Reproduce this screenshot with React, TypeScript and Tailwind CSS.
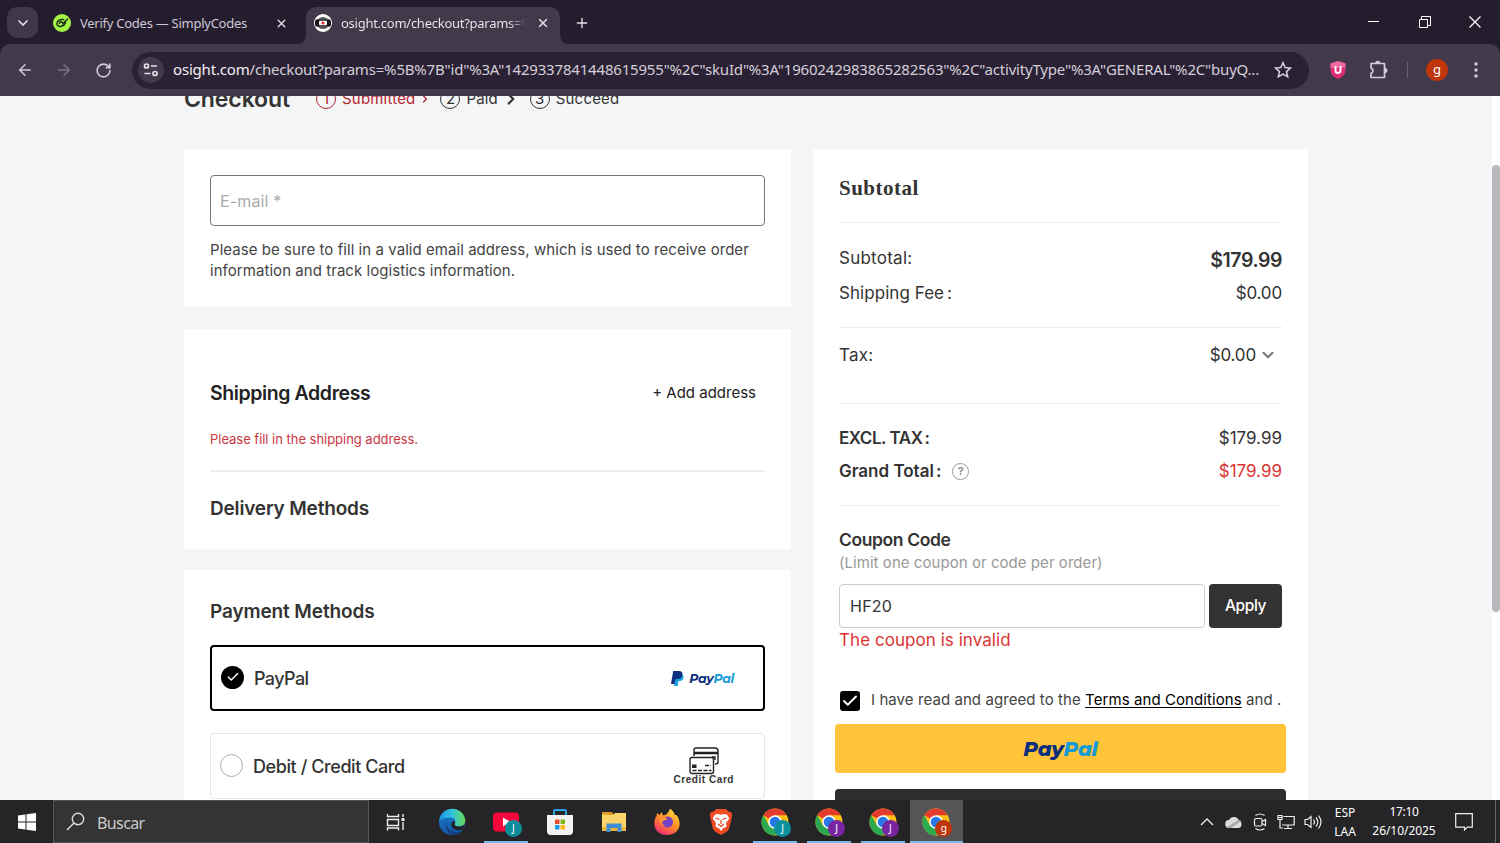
import type { ReactNode } from 'react';
import { ArrowLeft, ArrowRight, Check, ChevronDown, ChevronRight, Plus, RotateCw, X } from 'lucide-react';

// ── Helpers ──────────────────────────────────────────────────────────────────

const URL_TEXT =
  'osight.com/checkout?params=%5B%7B"id"%3A"1429337841448615955"%2C"skuId"%3A"1960242983865282563"%2C"activityType"%3A"GENERAL"%2C"buyQ...';

function PayPalWord({ className }: { className: string }) {
  return (
    <span className={`font-[Montserrat,Inter,sans-serif] italic ${className}`}>
      <span className="text-[#0b2f7d]">Pay</span>
      <span className="text-[#149bd7]">Pal</span>
    </span>
  );
}

// ── Browser chrome ───────────────────────────────────────────────────────────

function SimplyCodesIcon() {
  return (
    <svg viewBox="0 0 18 18" className="size-[18px]">
      <circle cx="9" cy="9" r="9" fill="#a3f545" />
      <g fill="none" stroke="#1c3018" strokeWidth="1.5" strokeLinecap="round" strokeLinejoin="round">
        <path d="M10.6 5.6C7.5 5 4.200 6.700 3.900 9.300c-.2 2.400 2.100 3.600 4.500 3 2-.5 3.500-2 4.200-3.700" />
        <path d="M6.500 9.300c.2-1.300 1.500-1.800 2.500-1.200l1 1.600L14.500 5" />
      </g>
    </svg>
  );
}

function OsightIcon() {
  return (
    <svg viewBox="0 0 18 18" className="size-[18px]">
      <circle cx="9" cy="9" r="9" fill="#fff" />
      <path d="M4 4.700Q9 1.700 14 4.700zM4 13.300Q9 16.300 14 13.300z" fill="#17141b" />
      <rect x="1" y="5.200" width="16" height="7.600" rx="2.500" fill="#17141b" />
      <rect x="5" y="6.700" width="8" height="4.600" rx="1" fill="#fff" />
      <circle cx="9" cy="9" r="1.600" fill="#e0313c" />
    </svg>
  );
}

function TabStrip() {
  return (
    <div className="flex h-11 items-end bg-[#241d2e] text-[#e4dfe8]">
      <div className="mb-1.5 ml-[7px] flex size-[31px] items-center justify-center rounded-[10px] bg-[#40384a]">
        <ChevronDown className="size-4" strokeWidth={2.5} />
      </div>
      <div className="ml-[15px] flex h-[37px] w-[237px] items-center pb-[5px]">
        <SimplyCodesIcon />
        <span className="ml-2 mt-px w-[196px] whitespace-nowrap pl-px text-[13px] tracking-[-0.26px] text-[#cfc8d6]">Verify Codes — SimplyCodes</span>
        <X className="size-[13px] shrink-0" strokeWidth={2.5} />
      </div>
      <svg viewBox="0 0 10 10" className="ml-1.5 size-[10px]">
        <path d="M10 0V10H0Q10 10 10 0" fill="#42394b" />
      </svg>
      <div className="flex h-[37px] w-[254px] items-center rounded-t-[10px] bg-[#42394b] pb-[5px] pl-2">
        <OsightIcon />
        <div className="ml-[9px] mt-px w-[186px] overflow-hidden whitespace-nowrap bg-gradient-to-r from-[#f0ecf3] from-90% to-[#42394b] to-100% bg-clip-text text-[13px] tracking-[-0.26px] text-transparent">
          osight.com/checkout?params=%5B
        </div>
        <X className="ml-[9px] size-[14px] shrink-0" strokeWidth={2.5} />
      </div>
      <svg viewBox="0 0 10 10" className="size-[10px]">
        <path d="M0 0V10H10Q0 10 0 0" fill="#42394b" />
      </svg>
      <Plus className="mb-[13px] ml-1 size-4" strokeWidth={2} />
      <div className="mb-[14px] ml-auto flex items-center gap-[38.500px] pr-[19px]">
        <svg viewBox="0 0 13 16" className="h-4 w-[13px]"><path d="M1 7.500H12" stroke="#fff" /></svg>
        <svg viewBox="0 0 12 12" className="size-3" fill="none" stroke="#fff">
          <path d="M.5 3.500h8v8h-8zM2.500 3.500v-3h9v9h-3" />
        </svg>
        <svg viewBox="0 0 12 12" className="size-3" stroke="#fff" strokeWidth="1.200"><path d="M.5.5l11 11M11.500.5L.5 11.500" /></svg>
      </div>
    </div>
  );
}

function Toolbar() {
  return (
    <div className="h-[52px] bg-[#241d2e]">
      <div className="flex h-full items-center rounded-t-[10px] bg-[#42394b] text-[#d5cbdc]">
        <ArrowLeft className="ml-4 size-[18px]" strokeWidth={2} />
        <ArrowRight className="ml-[21px] size-[18px] text-[#7d7486]" strokeWidth={2} />
        <RotateCw className="ml-[22px] size-[17px]" strokeWidth={2.300} />
        <div className="ml-5 flex h-[37px] w-[1177px] items-center rounded-full bg-[#2a2234] pl-1.5">
          <div className="flex size-[26px] shrink-0 items-center justify-center rounded-full bg-[#42394b]">
            <svg viewBox="0 0 16 16" className="size-4" fill="none" stroke="#e6dfeb" strokeWidth="1.700">
              <circle cx="3.500" cy="4" r="2" />
              <path d="M8 4h6M1.500 11.500h6" />
              <circle cx="12" cy="11.500" r="2" />
            </svg>
          </div>
          <span className="mb-0.5 ml-[9px] w-[1090px] whitespace-nowrap text-[15px] tracking-[-0.185px] text-[#d5ced9]">
            <span className="text-[#f3eff5]">osight.com</span>{URL_TEXT.slice(10)}
          </span>
          <svg viewBox="0 0 18 18" className="ml-[11px] size-[18px]" fill="none" stroke="#d9d0df" strokeWidth="1.500">
            <path d="M9 1.700l2.200 4.900 5.300.5-4 3.500 1.200 5.200L9 13.100l-4.700 2.700 1.200-5.200-4-3.500 5.300-.5z" />
          </svg>
        </div>
        <svg viewBox="0 0 16 18" className="ml-[21px] h-[18px] w-4">
          <path d="M8 0l7.500 2.500v6.800Q15.500 15 8 18 .5 15 .5 9.300V2.500z" fill="#df2e78" />
          <path d="M8 0l7.500 2.500v4L.5 7V2.500z" fill="#ef6aa0" />
          <path d="M5.500 5v4.500a2.500 2.500 0 005 0V5" fill="none" stroke="#fff" strokeWidth="1.900" />
        </svg>
        <svg viewBox="0 0 20 20" className="ml-[23px] size-5" fill="none" stroke="#d5cbdc" strokeWidth="1.700" strokeLinejoin="round">
          <path d="M2 3.500h13.500v14H2v-4.200a2.700 2.700 0 000-5.200z" />
          <path d="M7 3.200a1.700 1.700 0 013.400 0zM15.800 8.700a1.700 1.700 0 010 3.400z" fill="#d5cbdc" />
        </svg>
        <div className="ml-[18px] h-4 w-px bg-[#685d70]" />
        <div className="ml-[18px] flex size-[22px] items-center justify-center rounded-full bg-[#bf360c] pb-0.5 text-[13px] leading-none text-white">g</div>
        <svg viewBox="0 0 4 16" className="ml-[26px] h-4 w-1" fill="#d5cbdc">
          <circle cx="2" cy="2" r="1.700" /><circle cx="2" cy="8" r="1.700" /><circle cx="2" cy="14" r="1.700" />
        </svg>
      </div>
    </div>
  );
}

// ── Checkout page ────────────────────────────────────────────────────────────

function StepNumber({ n }: { n: number }) {
  return <span className="flex size-5 items-center justify-center rounded-full border border-current text-[15px]">{n}</span>;
}

function Steps() {
  return (
    <div className="-mt-3 flex h-[30px] items-center text-[15px] text-[#333]">
      <h1 className="w-[132px] text-[23px] font-semibold tracking-[-0.1px]">Checkout</h1>
      <div className="flex items-center gap-1.5 text-[#b5242f]">
        <StepNumber n={1} />
        <span className="tracking-[0.2px]">Submitted</span>
        <ChevronRight className="-ml-0.5 size-3" strokeWidth={2.500} />
      </div>
      <div className="ml-[9px] flex items-center gap-1.5">
        <StepNumber n={2} />
        <span className="tracking-[0.1px]">Paid</span>
        <ChevronRight className="-ml-0.5 size-[18px]" strokeWidth={3} />
      </div>
      <div className="ml-2.5 flex items-center gap-1.5">
        <StepNumber n={3} />
        <span className="tracking-[0.2px]">Succeed</span>
      </div>
    </div>
  );
}

function CreditCardIcon() {
  return (
    <svg viewBox="0 0 30 28" className="h-7 w-[30px]" fill="none" stroke="#222" strokeWidth="1.400">
      <path d="M5 9V3q0-2 2-2h19q3 0 3 3v11q0 2-3 2" />
      <path d="M5 6h24" strokeWidth="2.500" />
      <path d="M23 10h3v3" />
      <rect x="1" y="10.500" width="23.500" height="16" rx="2" fill="#fff" />
      <rect x="3" y="17.500" width="4.500" height="3.500" fill="#222" stroke="none" />
      <path d="M16 18.500h6M3.500 23.500h19" strokeDasharray="4 1.500" strokeWidth="1.300" />
    </svg>
  );
}

function PaymentCard() {
  return (
    <section className="h-[236px] bg-white px-[26px] pt-[31px]">
      <h2 className="text-[19px] font-semibold leading-[22px] tracking-[-0.12px]">Payment Methods</h2>
      <div className="mt-[22px] flex h-[66px] items-center rounded border-2 border-black pl-[9px] pr-[29px]">
        <div className="mb-0.5 flex size-[23px] items-center justify-center rounded-full bg-black text-white">
          <Check className="size-3.5" strokeWidth={2.500} />
        </div>
        <span className="ml-2.5 mt-px text-lg font-medium tracking-[-0.6px]">PayPal</span>
        <svg viewBox="0 0 13 15" className="ml-auto h-[15px] w-[13px]">
          <path d="M5 3h5q3 1 2.500 4-.8 3-4 3H7.500L6.700 15H3z" fill="#18a1df" />
          <path d="M2.200 0H8q4 .3 3.500 4-.8 4-5 4H4.500L3.500 13H0z" fill="#0d2f7e" />
        </svg>
        <PayPalWord className="ml-[5px] mt-0.5 text-[12.500px] font-bold tracking-[-0.3px]" />
      </div>
      <div className="mt-[22px] flex h-[66px] items-center rounded border border-[#e5e5e5] pl-[9px] pr-[30px]">
        <div className="mb-0.5 size-[23px] rounded-full border border-[#aaa]" />
        <span className="ml-2.5 mt-px text-lg font-medium tracking-[-0.42px]">Debit / Credit Card</span>
        <div className="ml-auto flex flex-col items-center">
          <CreditCardIcon />
          <span className="font-[Liberation_Sans,sans-serif] text-[10px] font-bold leading-[10px] tracking-[0.55px]">Credit Card</span>
        </div>
      </div>
    </section>
  );
}

function LeftColumn() {
  return (
    <div className="flex w-[607px] flex-col">
      <section className="h-[158px] bg-white px-[26px] pt-[26px]">
        <div className="flex h-[51px] items-center rounded border border-[#777] pl-[9px] text-base tracking-[0.15px] text-[#aaa]">E-mail *</div>
        <p className="mt-[13px] whitespace-nowrap text-[15px] leading-[21px] tracking-[0.055px] text-[#444]">
          Please be sure to fill in a valid email address, which is used to receive order
          <br />
          information and track logistics information.
        </p>
      </section>
      <section className="mt-[22px] h-[220px] bg-white px-[26px] pt-[52px]">
        <div className="flex h-6 items-center justify-between pr-[9px] text-[#222]">
          <h2 className="mt-px text-[19.500px] font-semibold tracking-[-0.4px]">Shipping Address</h2>
          <span className="text-[15px]">+ Add address</span>
        </div>
        <p className="mt-6 text-[13px] leading-5 tracking-[-0.03px] text-[#c8383f]">Please fill in the shipping address.</p>
        <div className="mt-[21px] border-t-2 border-[#eee]" />
        <h2 className="mt-[25px] text-[19px] font-semibold leading-6 tracking-[-0.17px]">Delivery Methods</h2>
      </section>
      <div className="mt-[21px]"><PaymentCard /></div>
    </div>
  );
}

function Row({ label, children }: { label: ReactNode; children: ReactNode }) {
  return (
    <div className="flex h-[34px] items-center justify-between">
      <span className="flex items-center">{label}</span>
      <span className="flex items-center">{children}</span>
    </div>
  );
}

function Summary() {
  return (
    <section className="flex h-[720px] w-[495px] flex-col bg-white px-[26px] text-[17px]">
      <h2 className="mt-[27px] font-[Liberation_Serif,serif] text-[21px] font-bold leading-6 tracking-[0.5px]">Subtotal</h2>
      <div className="mt-[22px] border-t border-[#eee]" />
      <div className="mt-[19px] flex flex-col gap-px">
        <Row label={<span className="tracking-[0.25px]">Subtotal:</span>}><span className="mt-[3px] text-[19.500px] font-semibold tracking-[-0.45px]">$179.99</span></Row>
        <Row label={<span className="tracking-[0.05px]">Shipping Fee<span className="ml-[3px]">:</span></span>}>
          <span className="tracking-[-0.15px]">$0.00</span>
        </Row>
      </div>
      <div className="mt-4 border-t border-[#eee]" />
      <div className="mt-2.5">
        <Row label={<span className="mt-px tracking-[0.2px]">Tax:</span>}>
          <span className="mt-px tracking-[-0.15px]">$0.00</span>
          <ChevronDown className="ml-[3px] mr-[5px] size-[18px] text-[#777]" strokeWidth={2.800} />
        </Row>
      </div>
      <div className="mt-[31px] border-t border-[#eee]" />
      <div className="mt-[18px] flex flex-col">
        <Row label={<span className="font-semibold tracking-[-0.45px]">EXCL. TAX<span className="ml-0.5">:</span></span>}>$179.99</Row>
        <div className="-mt-px">
          <Row
            label={
              <>
                <span className="font-semibold">Grand Total<span className="ml-0.5">:</span></span>
                <span className="mb-px ml-[11px] flex size-[17px] items-center justify-center rounded-full border-[1.500px] border-[#999] text-[11px] font-semibold text-[#888]">?</span>
              </>
            }
          >
            <span className="text-[#dc3433]">$179.99</span>
          </Row>
        </div>
      </div>
      <div className="mt-4 border-t border-[#eee]" />
      <h3 className="mt-[22px] text-[17.500px] font-semibold leading-6 tracking-[-0.4px]">Coupon Code</h3>
      <p className="text-[15px] leading-[22px] tracking-[0.05px] text-[#999]">(Limit one coupon or code per order)</p>
      <div className="mt-2.5 flex h-11 shrink-0 gap-1">
        <div className="flex w-[366px] items-center rounded border border-[#ccc] pl-2.5 text-base tracking-[0.25px]">HF20</div>
        <div className="flex flex-1 items-center justify-center rounded bg-[#333] text-[15.500px] font-medium tracking-[-0.4px] text-white">Apply</div>
      </div>
      <p className="leading-6 tracking-[0.05px] text-[#dc3433]">The coupon is invalid</p>
      <div className="mt-9 flex h-6 shrink-0 items-center whitespace-nowrap text-[15px] tracking-[0.075px] text-[#444]">
        <div className="ml-px mr-[11px] mt-0.5 flex size-5 shrink-0 items-center justify-center rounded-[3px] bg-black text-white">
          <Check className="size-[18px]" strokeWidth={2.500} />
        </div>
        I have read and agreed to the&nbsp;<span className="text-black underline underline-offset-2">Terms and Conditions</span>&nbsp;and .
      </div>
      <div className="-mx-1 mt-3 flex h-[49px] shrink-0 items-center justify-center rounded bg-[#ffc439]">
        <PayPalWord className="text-[20px] font-extrabold tracking-[-0.2px]" />
      </div>
      <div className="-mx-1 mt-4 h-[49px] shrink-0 rounded bg-[#2c2e2f]" />
    </section>
  );
}

// ── Taskbar ──────────────────────────────────────────────────────────────────

function Avatar({ letter, color }: { letter: string; color: string }) {
  return (
    <div className={`absolute -bottom-px -right-0.5 flex size-[17px] items-center justify-center rounded-full pb-px text-[10px] leading-none text-white ${color}`}>
      {letter}
    </div>
  );
}

function ChromeIcon() {
  return (
    <svg viewBox="0 0 28 28" className="size-7">
      <circle cx="14" cy="14" r="13.500" fill="#fbc116" />
      <path d="M14 14L2.300 7.200A13.500 13.500 0 0125.700 7.200H14z" fill="#e33b2e" />
      <path d="M2.300 7.200A13.500 13.500 0 0014 27.500L20 17.400 14 14 8 17.400z" fill="#2da94f" />
      <circle cx="14" cy="14" r="6.800" fill="#fff" />
      <circle cx="14" cy="14" r="5.300" fill="#2878e8" />
    </svg>
  );
}

function EdgeIcon() {
  return (
    <svg viewBox="0 0 28 28" className="size-7">
      <defs>
        <linearGradient id="edge-top"><stop stopColor="#1b91dc" /><stop offset=".5" stopColor="#33c3df" /><stop offset="1" stopColor="#68db55" /></linearGradient>
        <linearGradient id="edge-low" x2="0" y2="1"><stop stopColor="#177bce" /><stop offset="1" stopColor="#1456a7" /></linearGradient>
      </defs>
      <circle cx="14" cy="14" r="13" fill="url(#edge-low)" />
      <path d="M1 13C2 5 8 .7 14.500.7 22 .7 27 6.500 27.300 12.500c0 4-3.200 6-6.300 6-3.800 0-5.300-1.600-4.300-3 1.500-2.500-.2-6-4-6C7 9.500 3 11 1 13" fill="url(#edge-top)" />
      <path d="M10 11.500c-4 5 .5 12 8 12.500 3 0 5-.8 7-2-1.500 2.700-5.500 5.200-9.500 5.200C8 25 6 16 10 11.500" fill="#123f7c" />
      <path d="M17 15.500c-1 1.700 1 3.300 5 3l4.500-1.500-1.600 4.300c-3.900 2-10.400.7-11.400-3.300-.5-2 .5-4.500 2-5 1.700.3 2 1.500 1.500 2.500" fill="#232325" />
    </svg>
  );
}

function YouTubeIcon() {
  return (
    <svg viewBox="0 0 28 28" className="size-7">
      <rect x="1" y="4.500" width="26" height="19" rx="4" fill="#f5073b" />
      <path d="M11 9.500l7.500 4.500-7.500 4.500z" fill="#fff" />
    </svg>
  );
}

function StoreIcon() {
  return (
    <svg viewBox="0 0 28 28" className="size-7">
      <path d="M8 8V3q0-1 1-1h10q1 0 1 1v5" fill="none" stroke="#2aa5e8" strokeWidth="2" />
      <path d="M1 7h26v16q0 4-4 4H5q-4 0-4-4z" fill="#f3f3f3" />
      <path d="M9 11.500h4.500V16H9z" fill="#ee4b2b" /><path d="M14.500 11.500H19V16h-4.500z" fill="#7db81b" />
      <path d="M9 17h4.500v4.500H9z" fill="#1f9de3" /><path d="M14.500 17H19v4.500h-4.500z" fill="#fdb913" />
    </svg>
  );
}

function ExplorerIcon() {
  return (
    <svg viewBox="0 0 28 28" className="size-7">
      <path d="M2 4h10l2 3H2z" fill="#dc9a20" />
      <path d="M2 6.500L13 7l2-2h11v18H2z" fill="#fcd46a" />
      <path d="M2 19h24v4H2z" fill="#efb53e" />
      <path d="M6.500 24v-8.500h15V24h-4v-4h-7v4z" fill="#3f8dd3" />
    </svg>
  );
}

function FirefoxIcon() {
  return (
    <svg viewBox="0 0 28 28" className="size-7">
      <defs>
        <linearGradient id="fox" x1=".8" y1="0" x2=".2" y2="1"><stop stopColor="#ffe03a" /><stop offset=".5" stopColor="#ff8a25" /><stop offset="1" stopColor="#f2247a" /></linearGradient>
      </defs>
      <path d="M17 .8c3.500 2 4.500 5 5 6.200l1.800.3C27 12 28 18 24 23c-5 5.500-15 5.200-19.500.5C.5 19.500.5 12 3.500 8l.5-3 2.700 2L8.500 4l1.700 3.600C13 7.500 15.500 5 17 .8" fill="url(#fox)" />
      <circle cx="14.500" cy="14" r="5.500" fill="#7642c5" />
      <path d="M6.500 9c4-1.500 6 .3 8.200 2-2 1.500-4 .8-5.500 2.700-.7 1.500 1 3.300 3.800 3.700-5 1-7.500-4-6.500-8.400" fill="#ff9535" />
    </svg>
  );
}

function BraveIcon() {
  return (
    <svg viewBox="0 0 28 28" className="size-7">
      <path d="M9 1h10l2.300 2.500L24 4l1.300 3-.8 3.500L22 21q-1 2.500-8 6-7-3.500-8-6L3.500 10.500 2.700 7 4 4l2.700-.5z" fill="#f04b23" />
      <path d="M8 6.500l3-.5 3 .7 3-.7 3 .5 2.300 4-3.300 4.500.5 3.500-3.700 2L14 23l-1.800-2.500-3.700-2L9 15l-3.300-4.500z" fill="#fff" />
      <path d="M8.500 10l4 1.500M19.500 10l-4 1.500M14 12v4M11 16l3 2.500 3-2.500" fill="none" stroke="#e64522" strokeWidth="1.300" />
    </svg>
  );
}

const TASKS = [
  { icon: <EdgeIcon /> },
  { icon: <YouTubeIcon />, letter: 'J', color: 'bg-[#0d8d9c]', open: true },
  { icon: <StoreIcon /> },
  { icon: <ExplorerIcon /> },
  { icon: <FirefoxIcon /> },
  { icon: <BraveIcon /> },
  { icon: <ChromeIcon />, letter: 'J', color: 'bg-[#0d91a0]', open: true },
  { icon: <ChromeIcon />, letter: 'J', color: 'bg-[#7925a1]', open: true },
  { icon: <ChromeIcon />, letter: 'J', color: 'bg-[#7925a1]', open: true },
  { icon: <ChromeIcon />, letter: 'g', color: 'bg-[#bf360c]', open: true, active: true },
];

function Tray() {
  return (
    <div className="ml-auto flex h-full items-center text-xs text-white">
      <svg viewBox="0 0 14 8" className="h-2 w-[14px]" fill="none" stroke="#eee" strokeWidth="1.300"><path d="M1 7l6-6 6 6" /></svg>
      <svg viewBox="0 0 18 12" className="ml-[11px] h-3 w-[18px]">
        <path d="M4.500 12A4 4 0 014 4 5.500 5.500 0 0114 4.500 4 4 0 0114 12z" fill="#ddd" />
        <path d="M2 11L13 4q2 0 3.500 1L6 12H4" fill="#aaa" />
      </svg>
      <svg viewBox="0 0 14 18" className="ml-2.5 h-[18px] w-[14px]" fill="none" stroke="#eee" strokeWidth="1.200">
        <rect x="1.500" y="5.500" width="7.500" height="7.500" rx="1.500" />
        <path d="M9 8.500l3.500-2v6L9 10.500M2.500 2.500q4.500-3 9 0M2.500 15.500q4.500 3 9 0" />
      </svg>
      <svg viewBox="0 0 18 16" className="ml-2.5 h-4 w-[18px]" fill="none" stroke="#eee" strokeWidth="1.200">
        <path d="M6.500 2.500h10.700v8.500h-12M11 11v3.500M7 14.500h8M3 6v8h3" />
        <path d="M1 1.500h4v4H1zM1 3.500h4" />
      </svg>
      <svg viewBox="0 0 19 16" className="ml-[9px] h-4 w-[19px]" fill="none" stroke="#eee" strokeWidth="1.200">
        <path d="M1 5.500h2.500L7 2.500v11l-3.500-3H1zM9.500 5.500q2 2.500 0 5M12 3.500q3.700 4.500 0 9M14.500 1.500q5 6.500 0 13" />
      </svg>
      <div className="ml-[7px] flex w-[30px] flex-col items-center leading-[19px]"><span>ESP</span><span>LAA</span></div>
      <div className="ml-2.5 mr-[-1px] flex w-[68px] flex-col items-center whitespace-nowrap leading-[19px] tracking-[-0.05px]">
        <span className="-mt-px tracking-[-0.3px]">17:10</span><span>26/10/2025</span>
      </div>
      <svg viewBox="0 0 18 18" className="ml-[18px] size-[18px]" fill="none" stroke="#eee" strokeWidth="1.200">
        <path d="M.7.700h16.600v13.500h-5L9.500 17v-2.800H.7z" />
      </svg>
      <div className="ml-[22px] mr-1 h-full w-px bg-[#666]" />
    </div>
  );
}

function Taskbar() {
  return (
    <div className="flex h-[43px] items-center bg-[#252528]">
      <div className="flex w-[53px] justify-center">
        <svg viewBox="0 0 18 18" className="size-[18px]" fill="#fff">
          <path d="M0 2.500l7.500-1v7H0zM8.500 1.300L18 0v8.500H8.500zM0 9.500h7.500v7l-7.500-1zM8.500 9.500H18V18l-9.500-1.300z" />
        </svg>
      </div>
      <div className="flex h-full w-[316px] items-center border border-[#555] bg-[#343434] pl-3">
        <svg viewBox="0 0 19 19" className="size-[19px]" fill="none" stroke="#ddd" strokeWidth="1.400">
          <circle cx="12" cy="7" r="5.700" /><path d="M8 11L1 18" />
        </svg>
        <span className="ml-3 mt-0.5 text-base tracking-[-0.6px] text-[#ccc]">Buscar</span>
      </div>
      <div className="flex w-14 justify-center pr-0.5">
        <svg viewBox="0 0 20 18" className="h-[18px] w-5" fill="none" stroke="#eee" strokeWidth="1.400">
          <path d="M1.500 1v2.500h11V1M1.500 6.500h11v6h-11zM1.500 17.500V15h11v2.500M17 1v3M17 9v8" />
          <path d="M15.500 5h3v3h-3z" fill="#eee" stroke="none" />
        </svg>
      </div>
      {TASKS.map((t, i) => (
        <div key={i} className={`flex h-full flex-col items-center ${t.active ? 'w-[53px] bg-[#555557]' : 'w-[53.890px]'}`}>
          <div className="relative mt-2 size-7">
            {t.icon}
            {t.letter && <Avatar letter={t.letter} color={t.color} />}
          </div>
          {t.open && <div className={`mt-auto h-0.5 bg-[#76b9ed] ${t.active ? 'w-full' : 'w-11'}`} />}
        </div>
      ))}
      <Tray />
    </div>
  );
}

// ── App ──────────────────────────────────────────────────────────────────────

export default function App() {
  return (
    <div className="flex h-[843px] w-[1500px] flex-col overflow-hidden font-[Noto_Sans,sans-serif]">
      <TabStrip />
      <Toolbar />
      <main className="flex h-[704px] overflow-hidden bg-[#f4f5f7] font-[Inter,sans-serif] text-[#333]">
        <div className="w-[1492px] pl-[184px]">
          <Steps />
          <div className="mt-[35px] flex gap-[22px]">
            <LeftColumn />
            <Summary />
          </div>
        </div>
        <div className="w-2 bg-white pt-[69px]">
          <div className="h-[447px] rounded-full bg-[#b8b8bc]" />
        </div>
      </main>
      <Taskbar />
    </div>
  );
}
